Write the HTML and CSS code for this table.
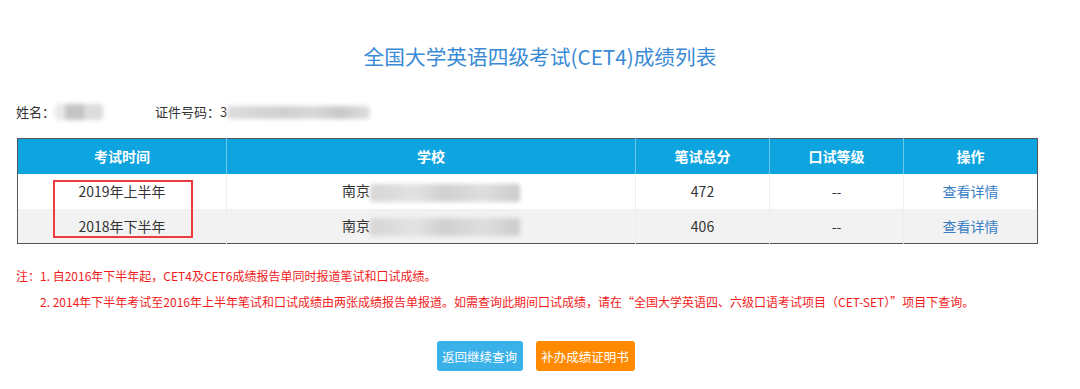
FILE: index.html
```html
<!DOCTYPE html>
<html lang="zh">
<head>
<meta charset="utf-8">
<link rel="stylesheet" href="styles.css">
</head>
<body>
<div class="page">
  <h1 class="title">全国大学英语四级考试(CET4)成绩列表</h1>
  <div class="info">
    <span class="field">姓名：<span class="blur blur-name"></span></span>
    <span class="field">证件号码：3<span class="blur blur-id"></span></span>
  </div>
  <div class="table-wrap">
    <table class="scores">
      <colgroup>
        <col style="width:209px"><col style="width:409px"><col style="width:134px"><col style="width:134px"><col style="width:134px">
      </colgroup>
      <thead>
        <tr><th>考试时间</th><th>学校</th><th>笔试总分</th><th>口试等级</th><th>操作</th></tr>
      </thead>
      <tbody>
        <tr><td>2019年上半年</td><td class="school">南京<span class="blur blur-school"></span></td><td>472</td><td>--</td><td><a class="link">查看详情</a></td></tr>
        <tr class="alt"><td>2018年下半年</td><td class="school">南京<span class="blur blur-school"></span></td><td>406</td><td>--</td><td><a class="link">查看详情</a></td></tr>
      </tbody>
    </table>
    <div class="mark"></div>
  </div>
  <div class="notes">
    <p>注：1. 自2016年下半年起，CET4及CET6成绩报告单同时报道笔试和口试成绩。</p>
    <p class="indent">2. 2014年下半年考试至2016年上半年笔试和口试成绩由两张成绩报告单报道。如需查询此期间口试成绩，请在“全国大学英语四、六级口语考试项目（CET-SET）”项目下查询。</p>
  </div>
  <div class="actions">
    <button class="btn btn-blue">返回继续查询</button>
    <button class="btn btn-orange">补办成绩证明书</button>
  </div>
</div>
</body>
</html>
```

FILE: styles.css
```css
* { box-sizing: border-box; }
html, body { margin: 0; padding: 0; background: #fff; }
body { font-family: "Noto Sans CJK SC", "Noto Sans", sans-serif; color: #333; width: 1080px; height: 389px; overflow: hidden; }
.page { padding: 0 17px; }
.title { margin: 0; padding-top: 41px; height: 94px; text-align: center; font-size: 20.7px; font-weight: normal; color: #3a8ad6; line-height: 30px; }
.info { display: flex; align-items: flex-start; font-size: 13px; height: 44px; padding-top: 8px; margin-left: -1px; }
.field { display: inline-flex; align-items: center; height: 20px; line-height: 20px; }
.field:first-child { width: 139px; }
.blur { display: inline-block; background: #d2d2d2; filter: blur(2px); border-radius: 3px; }
.blur-name { width: 48px; height: 16px; background: linear-gradient(90deg, #e8e8e8 0 20%, #c4c4c4 20% 60%, #dcdcdc 60%); }
.blur-id { width: 143px; height: 13px; background: linear-gradient(90deg, #ddd, #cfcfcf 40%, #d8d8d8 60%, #c8c8c8 80%, #e0e0e0); }
.blur-school { width: 150px; height: 18px; vertical-align: middle; background: linear-gradient(90deg, #d6d6d6, #e2e2e2 30%, #d0d0d0 50%, #dedede 75%, #cccccc); }
.table-wrap { position: relative; width: 1020px; }
.scores { width: 1020px; border-collapse: collapse; table-layout: fixed; border: 1px solid #555; font-size: 14px; }
.scores th { background: #0ea4e0; color: #fff; height: 35px; font-weight: bold; border-left: 1px solid #6cc9ee; padding: 0; }
.scores th:first-child { border-left: none; }
.scores td { height: 35px; text-align: center; padding: 0; border-left: 1px solid #eee; }
.scores td:first-child { border-left: none; }
.scores tr.alt td { background: #f2f2f2; }
.school { white-space: nowrap; }
.link { color: #3a7fc6; text-decoration: none; }
.mark { position: absolute; left: 36px; top: 42px; width: 140px; height: 58px; border: 2px solid #ee3b3b; }
.notes { color: #f21b1b; font-size: 12px; margin-top: 19px; margin-left: -1px; }
.notes p { margin: 0; line-height: 26px; height: 26px; }
.notes .indent { padding-left: 24px; }
.actions { display: flex; justify-content: center; gap: 13px; margin-top: 26px; margin-left: -9px; }
.btn { font-family: inherit; font-size: 12.5px; color: #fff; border: none; border-radius: 3px; height: 30px; padding: 0; white-space: nowrap; text-align: center; }
.btn-blue { background: #3bb1ea; width: 86px; }
.btn-orange { background: #ff8a00; width: 99px; }
```
